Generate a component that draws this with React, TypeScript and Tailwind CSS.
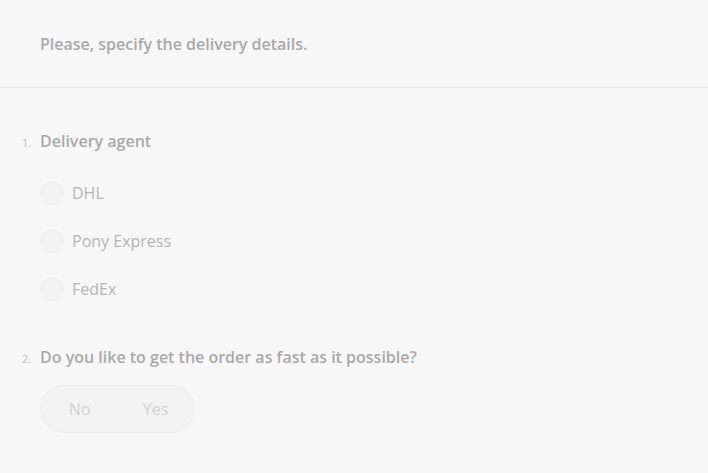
import React from "react";

const agents = ["DHL", "Pony Express", "FedEx"];

const App = () => {
  return (
    <div className="w-[708px] h-[473px] bg-[#f7f7f7] font-['Open_Sans',sans-serif] overflow-hidden">
      <div className="h-[88px] border-b border-[#ececec] flex items-center px-[40px]">
        <h1 className="text-[16px] font-semibold text-[#a9a9a9]">Please, specify the delivery details.</h1>
      </div>

      <div className="pt-[41px]">
        <div className="flex items-baseline">
          <span className="w-[40px] pl-[22px] text-[11px] text-[#bdbdbd]">1.</span>
          <h2 className="text-[16px] font-semibold text-[#a9a9a9] leading-[24px]">Delivery agent</h2>
        </div>
        <div className="flex flex-col gap-[24px] mt-[28px] pl-[40px]">
          {agents.map((a) => (
            <label key={a} className="flex items-center gap-[8px] h-[24px]">
              <span className="w-[24px] h-[24px] rounded-full bg-[#f3f3f3] border border-[#eeeeee]" />
              <span className="text-[16px] text-[#b5b5b5]">{a}</span>
            </label>
          ))}
        </div>

        <div className="flex items-baseline mt-[44px]">
          <span className="w-[40px] pl-[22px] text-[11px] text-[#bdbdbd]">2.</span>
          <h2 className="text-[16px] font-semibold text-[#a9a9a9] leading-[24px]">
            Do you like to get the order as fast as it possible?
          </h2>
        </div>
        <div className="pl-[40px] mt-[16px]">
          <div className="w-[155px] h-[48px] rounded-full bg-[#f3f3f3] border border-[#eeeeee] flex items-center">
            <span className="w-[77px] text-center text-[16px] text-[#d2d2d2]">No</span>
            <span className="w-[75px] text-center text-[16px] text-[#d2d2d2]">Yes</span>
          </div>
        </div>
      </div>
    </div>
  );
};

export default App;
